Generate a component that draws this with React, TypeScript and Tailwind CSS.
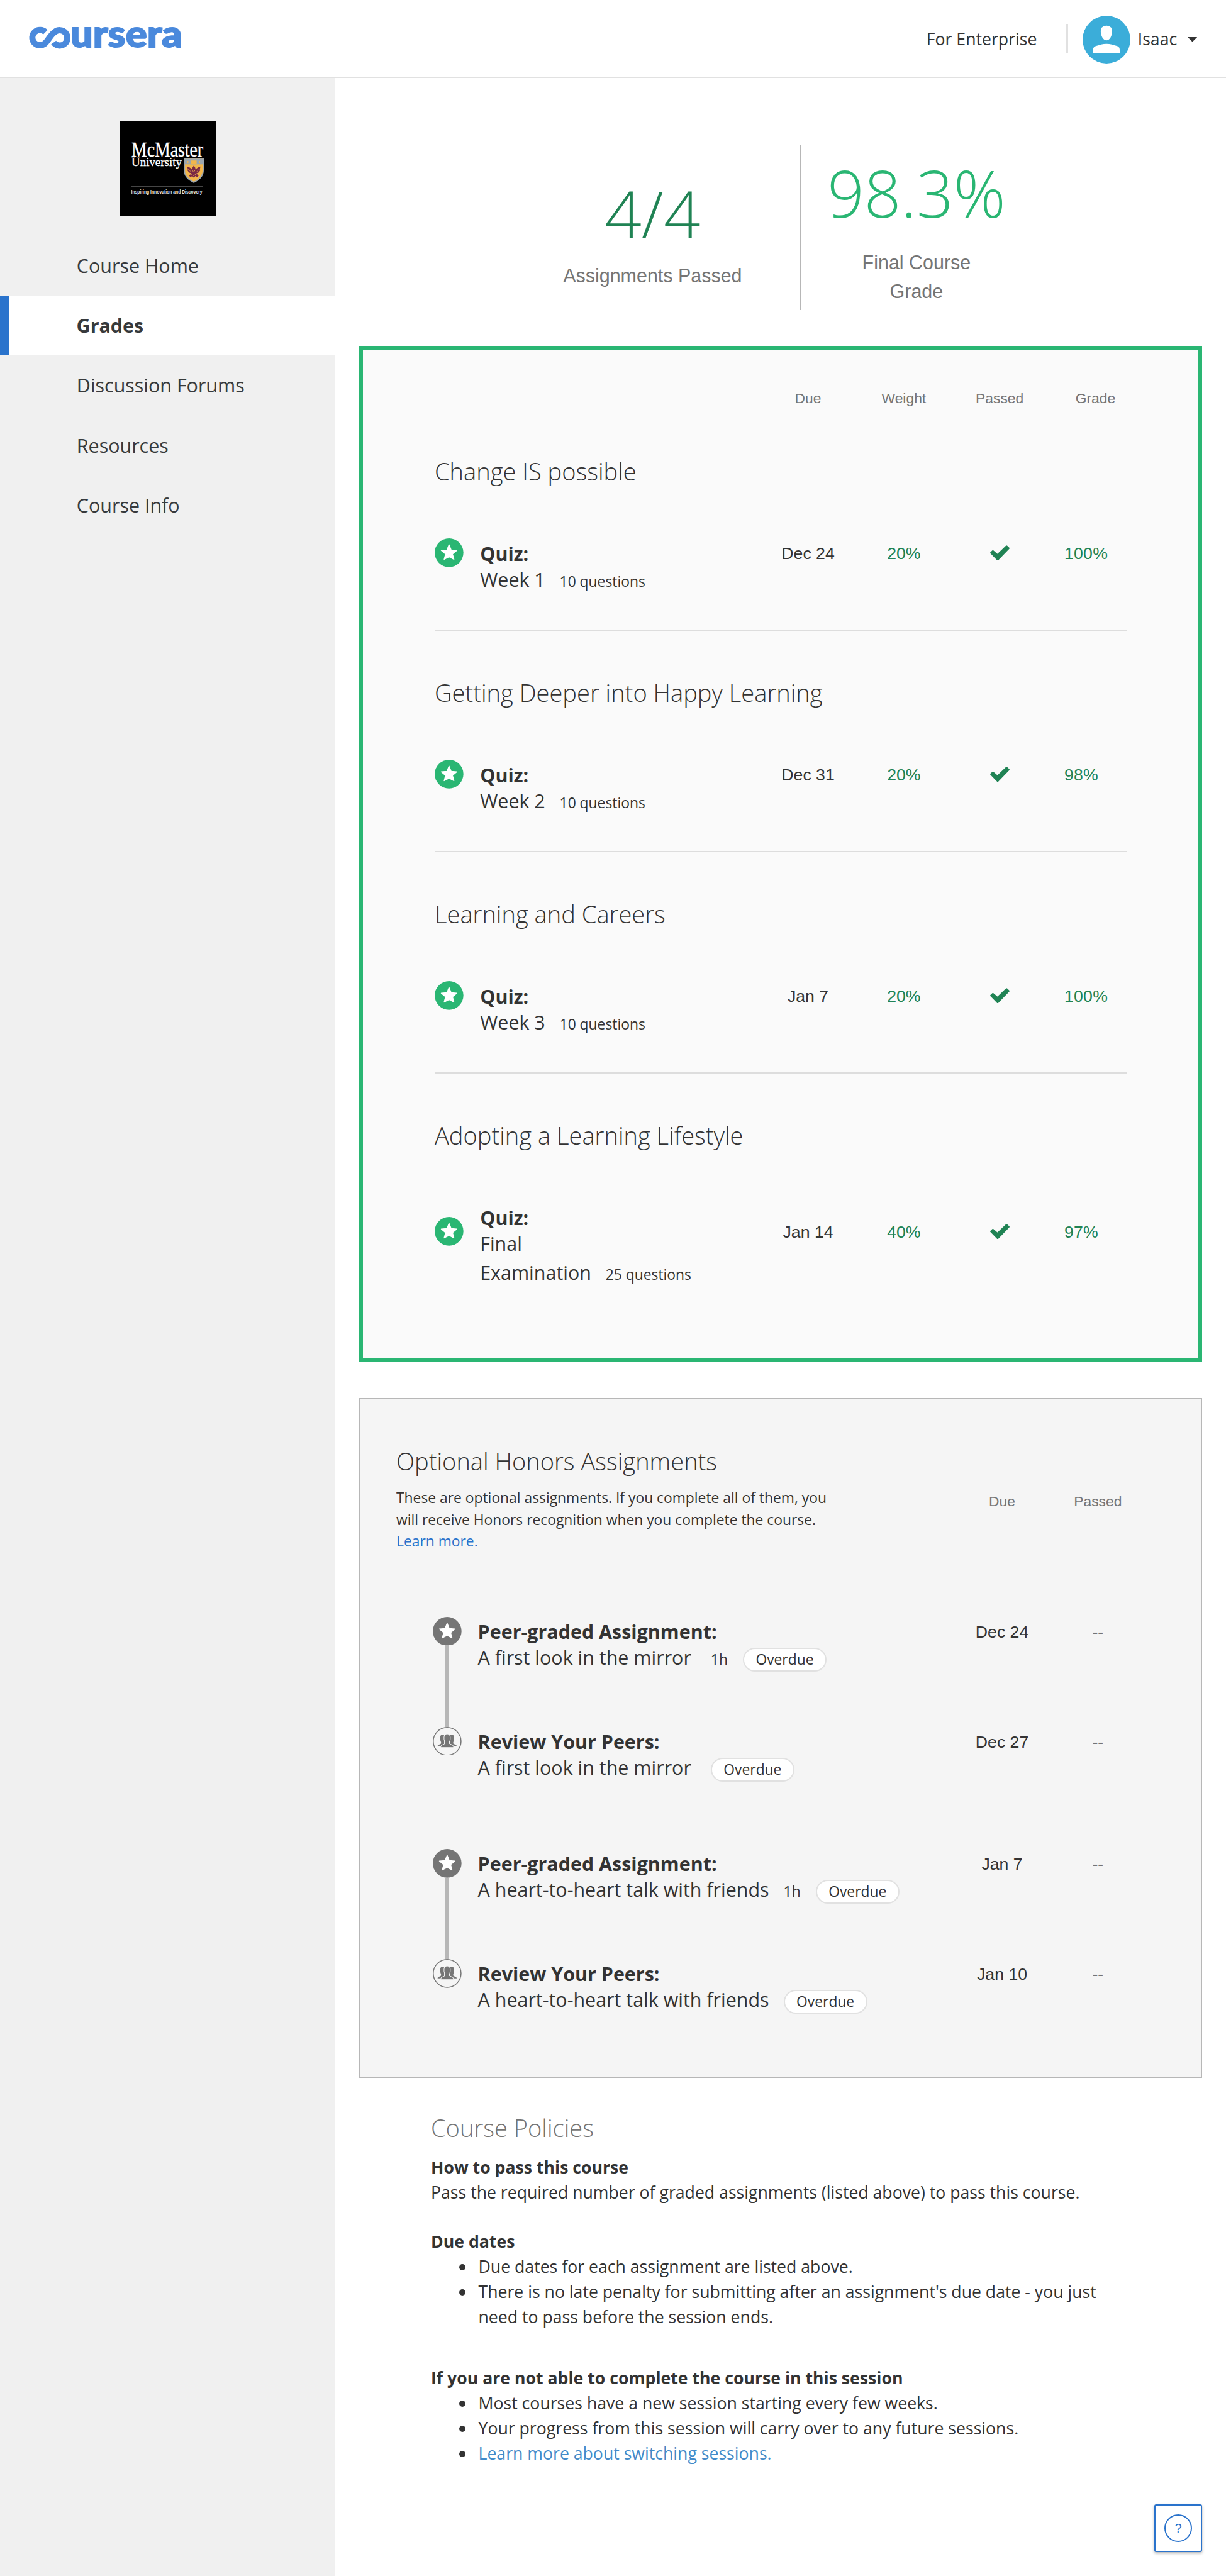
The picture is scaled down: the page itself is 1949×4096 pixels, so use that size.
import React from "react";

const OPEN = "font-['Open_Sans',sans-serif]";
const ARIAL = "font-['Liberation_Sans',sans-serif]";

function CourseraLogo() {
  return (
    <svg className="mt-[11px] block h-[76.1px] w-[276px] overflow-visible" viewBox="0 0 870 240" aria-label="coursera">
      <path
        d="M136 73 A38.5 38.5 0 1 0 132 131 C150 116 160 88 182 73 A38.5 38.5 0 1 1 177 125"
        fill="none"
        stroke="#4a89dc"
        strokeWidth="31"
      />
      <text
        x="261"
        y="149"
        fill="#4a89dc"
        stroke="#4a89dc"
        strokeWidth="6"
        fontFamily="Lato"
        fontWeight="900"
        fontSize="184"
        textLength="561"
        lengthAdjust="spacingAndGlyphs"
      >
        ursera
      </text>
    </svg>
  );
}

function McMasterLogo() {
  return (
    <svg className="block size-[152px] overflow-visible" viewBox="0 0 160 160">
      <rect width="160" height="160" fill="#000" />
      <g fill="#fff" fontFamily="Liberation Serif, serif">
        <text x="19" y="60" fontSize="34.5" textLength="120" lengthAdjust="spacingAndGlyphs" stroke="#fff" strokeWidth="0.4">
          McMaster
        </text>
        <text x="19" y="76" fontSize="20" textLength="84" lengthAdjust="spacingAndGlyphs" stroke="#fff" strokeWidth="0.3">
          University
        </text>
      </g>
      <path
        d="M107.5 63 H139 V83 C139 93 132 99 123.3 103 C114.5 99 107.5 93 107.5 83 Z"
        fill="#f2b54a"
        stroke="#9aa5ae"
        strokeWidth="2"
      />
      <path d="M108.5 64 H138 V73 H108.5 Z" fill="#9aa5ae" />
      <path d="M118.5 66.5 H128 V71.5 H118.5 Z M111.5 69 l1.8 -1.8 l1.8 1.8 l-1.8 1.8 Z M131 69 l1.8 -1.8 l1.8 1.8 l-1.8 1.8 Z" fill="#f2b54a" />
      <path
        d="M123.3 75 l2 3 l1 3 l5 -3.5 l3 -1 l-1 5 l1 1 l-3 4 l-4 2 l4 3 l-2 3 l-3.5 -2 l-2.5 3 l-2.5 -3 l-3.5 2 l-2 -3 l4 -3 l-4 -2 l-3 -4 l1 -1 l-1 -5 l3 1 l5 3.5 l1 -3 Z"
        fill="#7a2a45"
      />
      <path d="M120 82 l3 4 l3 -4 M117 88 l6 4 l6 -4 M113 80 l5 5 M133.5 80 l-5 5" fill="none" stroke="#f2b54a" strokeWidth="0.9" />
      <path d="M19 110.5 H138" stroke="#8c8c8c" strokeWidth="1" />
      <text
        x="18.5"
        y="121.8"
        fill="#e6e6e6"
        fontFamily="Liberation Sans, sans-serif"
        fontWeight="700"
        fontSize="9.8"
        textLength="119"
        lengthAdjust="spacingAndGlyphs"
      >
        Inspiring Innovation and Discovery
      </text>
    </svg>
  );
}

function Avatar() {
  return (
    <svg className="block size-[76px]" viewBox="0 0 80 80">
      <circle cx="40" cy="40" r="40" fill="#3badd9" />
      <path
        d="M40 16.7 C46 16.7 49.4 20.5 49.4 26 C49.4 33.5 45.5 41.2 40 41.2 C34.5 41.2 30.4 33.5 30.4 26 C30.4 20.5 34 16.7 40 16.7 Z"
        fill="#fff"
      />
      <path d="M16.8 63 L17.6 56 C18 52.8 19.8 51.4 23 50.4 C28 49 34 47 40 47 C46 47 52 49 57 50.4 C60.2 51.4 61.6 52.8 62 56 L62.8 63 Z" fill="#fff" />
    </svg>
  );
}

function StarBadge({ color }: { color: string }) {
  return (
    <svg className="block size-[45.7px] shrink-0" viewBox="0 0 48 48">
      <circle cx="24" cy="24" r="24" fill={color} />
      <path
        d="M24 10.6 L27.6 19.4 L37 20.1 L29.8 26.2 L32.2 35.2 L24 31 L15.8 35.2 L18.2 26.2 L11 20.1 L20.4 19.4 Z"
        fill="#fff"
        stroke="#fff"
        strokeWidth="1.4"
        strokeLinejoin="round"
      />
    </svg>
  );
}

function PeersBadge() {
  return (
    <svg className="block size-[45.7px] shrink-0" viewBox="0 0 48 48">
      <circle cx="24" cy="24" r="23.2" fill="none" stroke="#757575" strokeWidth="1.6" />
      <g fill="#757575">
        <path d="M8 32.4 C8 30.4 9.6 29.8 12.8 28.4 C14.2 27.7 14.2 26.4 13.5 24.6 C12.4 22 12 19 12.4 16.6 C12.9 14 14.4 13 16.3 13 C17.6 13 18.4 13.5 19 14.2 V28 L15 32.4 Z" />
        <path d="M40 32.4 C40 30.4 38.4 29.8 35.2 28.4 C33.8 27.7 33.8 26.4 34.5 24.6 C35.6 22 36 19 35.6 16.6 C35.1 14 33.6 13 31.7 13 C30.4 13 29.6 13.5 29 14.2 V28 L33 32.4 Z" />
        <path
          d="M13.2 34.4 C13 31 14.8 30.2 19 28.5 C20.8 27.7 20.8 26.4 20 24.8 C18.9 22.2 18.5 19.4 18.8 16.8 C19.2 13.4 21.2 11.6 24 11.6 C26.8 11.6 28.8 13.4 29.2 16.8 C29.5 19.4 29.1 22.2 28 24.8 C27.2 26.4 27.2 27.7 29 28.5 C33.2 30.2 35 31 34.8 34.4 Z"
          stroke="#f5f5f5"
          strokeWidth="1.1"
        />
      </g>
    </svg>
  );
}

function Check() {
  return (
    <svg className="block h-[24.5px] w-[31px]" viewBox="0 0 98 77">
      <path d="M5 38 L14 29 L37 49 L83 5 L93 15 L38 72 Z" fill="#208354" stroke="#208354" strokeWidth="9" strokeLinejoin="round" />
    </svg>
  );
}

const nav = ["Course Home", "Grades", "Discussion Forums", "Resources", "Course Info"];

type Quiz = { section: string; name: React.ReactNode; questions: number; due: string; weight: string; grade: string };

const quizzes: Quiz[] = [
  { section: "Change IS possible", name: "Week 1", questions: 10, due: "Dec 24", weight: "20%", grade: "100%" },
  { section: "Getting Deeper into Happy Learning", name: "Week 2", questions: 10, due: "Dec 31", weight: "20%", grade: "98%" },
  { section: "Learning and Careers", name: "Week 3", questions: 10, due: "Jan 7", weight: "20%", grade: "100%" },
  {
    section: "Adopting a Learning Lifestyle",
    name: (
      <>
        Final
        <br />
        Examination
      </>
    ),
    questions: 25,
    due: "Jan 14",
    weight: "40%",
    grade: "97%",
  },
];

function QuizSection({ quiz, last }: { quiz: Quiz; last: boolean }) {
  return (
    <section className={last ? "pt-[72px]" : "border-b-2 border-[#dddddd] pt-[72px] pb-[57.2px]"}>
      <h2 className="text-[38.07px] leading-[52px] font-light">{quiz.section}</h2>
      <div className="mt-[39px] -mr-[26.6px] flex items-center">
        <StarBadge color="#2ab673" />
        <div className="ml-[26.5px] grow pt-[47px] text-[30.45px]">
          <div className="leading-[38px] font-bold">Quiz:</div>
          <div className="-mb-[0.8px] leading-[45.7px]">
            {quiz.name}
            <span className="ml-[22.8px] text-[22.84px] leading-none">{quiz.questions} questions</span>
          </div>
        </div>
        <div className={`flex items-center text-[26.65px] leading-[30px] ${ARIAL}`}>
          <div className="w-[152.3px] pt-[2px] text-center">{quiz.due}</div>
          <div className="w-[152.3px] pt-[2px] text-center text-[#208354]">{quiz.weight}</div>
          <div className="flex w-[152.3px] justify-center">
            <Check />
          </div>
          <div className="w-[152.3px] pt-[2px] pl-[26.6px] tracking-[0.3px] text-[#208354]">{quiz.grade}</div>
        </div>
      </div>
    </section>
  );
}

type Peer = { title: string; name: string; time?: string; due: string; first: boolean; wide: boolean };

const peers: Peer[] = [
  { title: "Peer-graded Assignment:", name: "A first look in the mirror", time: "1h", due: "Dec 24", first: true, wide: true },
  { title: "Review Your Peers:", name: "A first look in the mirror", due: "Dec 27", first: false, wide: true },
  { title: "Peer-graded Assignment:", name: "A heart-to-heart talk with friends", time: "1h", due: "Jan 7", first: true, wide: false },
  { title: "Review Your Peers:", name: "A heart-to-heart talk with friends", due: "Jan 10", first: false, wide: false },
];

function PeerRow({ item }: { item: Peer }) {
  return (
    <div className={item.first ? "flex h-[175.1px]" : "flex h-[194.1px]"}>
      <div className="flex w-[45.7px] flex-col items-center">
        {item.first ? <StarBadge color="#757575" /> : <PeersBadge />}
        {item.first && <div className="w-[5.7px] grow bg-[#b7b7b7]" />}
      </div>
      <div className="ml-[25.9px] grow pt-[5.2px] text-[30.45px]">
        <div className="leading-[37.2px] font-bold">{item.title}</div>
        <div className="flex items-baseline leading-[45.7px]">
          <span className={item.wide ? "mr-[31px]" : "mr-[23px]"}>{item.name}</span>
          {item.time && <span className="mr-[24px] text-[22.84px]">{item.time}</span>}
          <span className="rounded-full border-2 border-[#e1e1e1] bg-white px-[18.5px] text-[22.84px] leading-[34px]">Overdue</span>
        </div>
      </div>
      <div className={`flex pt-[9px] text-[26.65px] leading-[30px] ${ARIAL}`}>
        <div className="w-[152.3px] text-center">{item.due}</div>
        <div className="w-[152.3px] text-center text-[#757575]">--</div>
      </div>
    </div>
  );
}

function Bullet({ children }: { children: React.ReactNode }) {
  return (
    <li className="flex">
      <span className="mt-[15px] mr-[21px] ml-[44.5px] size-[10px] shrink-0 rounded-full bg-[#333333]" />
      <span>{children}</span>
    </li>
  );
}

export default function App() {
  return (
    <div className={`flex h-[4096px] w-[1949px] flex-col overflow-hidden bg-white text-[#333333] ${OPEN}`}>
      <header className="flex h-[124px] shrink-0 items-center border-b-2 border-[#e1e1e1] pr-[45.6px] pl-[28.5px]">
        <CourseraLogo />
        <div className="grow" />
        <span className="mt-[3px] text-[26.65px]">For Enterprise</span>
        <div className="mt-px ml-[46px] h-[47.6px] w-[3.8px] bg-[#e1e1e1]" />
        <div className="mt-[3px] ml-[23px]">
          <Avatar />
        </div>
        <span className="mt-[3px] ml-[11.5px] text-[26.65px]">Isaac</span>
        <svg className="mt-[3px] ml-[17px] h-[7.6px] w-[15.2px]" viewBox="0 0 16 8">
          <path d="M0 0 H16 L8 8 Z" fill="#333333" />
        </svg>
      </header>

      <div className="flex grow">
        <aside className="w-[533px] shrink-0 bg-[#f0f0f0] text-[#373a3c]">
          <div className="flex justify-center pt-[68.3px]">
            <McMasterLogo />
          </div>
          <nav className="mt-[30.6px] text-[30.45px]">
            {nav.map((label) => (
              <div
                key={label}
                className={
                  label === "Grades"
                    ? "flex h-[95.17px] items-center border-l-[15.2px] border-[#2a73cc] bg-white pt-px pl-[106.6px] font-bold"
                    : "flex h-[95.17px] items-center pt-px pl-[121.8px]"
                }
              >
                {label}
              </div>
            ))}
          </nav>
        </aside>

        <main className="flex grow flex-col px-[38px] pt-[106.4px]">
          <div className="ml-[232.4px] flex h-[262.6px] text-center">
            <div className="w-[468px] pt-[48.5px]">
              <div className="text-[102.8px] leading-[120px] font-light text-[#208354]">4/4</div>
              <div className={`mt-[17.3px] text-[30.45px] leading-[45.7px] text-[#757575] ${ARIAL}`}>Assignments Passed</div>
            </div>
            <div className="w-[2px] bg-[#b7b7b7]" />
            <div className="w-[367px] pt-[16px]">
              <div className="text-[102.8px] leading-[120px] font-light text-[#2ab673]">98.3%</div>
              <div className={`mt-[28.8px] text-[30.45px] leading-[45.7px] text-[#757575] ${ARIAL}`}>
                Final Course
                <br />
                Grade
              </div>
            </div>
          </div>

          <div className="mt-[57px] h-[1616px] shrink-0 border-6 border-[#2ab673] bg-[#fafafa] px-[114px] pt-[62px]">
            <div className={`-mr-[26.6px] mb-[3px] flex justify-end text-[22.84px] leading-[30px] text-[#757575] ${ARIAL}`}>
              {["Due", "Weight", "Passed", "Grade"].map((label) => (
                <div key={label} className="w-[152.3px] text-center">
                  {label}
                </div>
              ))}
            </div>
            {quizzes.map((quiz, i) => (
              <QuizSection key={quiz.section} quiz={quiz} last={i === quizzes.length - 1} />
            ))}
          </div>

          <div className="mt-[57.3px] h-[1080.5px] shrink-0 border-2 border-[#b7b7b7] bg-[#f5f5f5] pt-[71.5px] pr-[87.5px] pl-[57px]">
            <h2 className="text-[38.07px] leading-[52px] font-light">Optional Honors Assignments</h2>
            <div className="mt-[16.5px] flex justify-between">
              <p className="text-[22.84px] leading-[34.25px] whitespace-nowrap">
                These are optional assignments. If you complete all of them, you
                <br />
                will receive Honors recognition when you complete the course.
                <br />
                <a className="text-[#2a73cc]">Learn more.</a>
              </p>
              <div className={`flex pt-[7px] text-[22.84px] leading-[30px] text-[#757575] ${ARIAL}`}>
                <div className="w-[152.3px] text-center">Due</div>
                <div className="w-[152.3px] text-center">Passed</div>
              </div>
            </div>
            <div className="mt-[102.6px] ml-[58px]">
              {peers.map((item, i) => (
                <PeerRow key={i} item={item} />
              ))}
            </div>
          </div>

          <div className="mt-[53.6px] ml-[114px] text-[26.65px] leading-[39.95px]">
            <h2 className="text-[38.07px] leading-[52px] font-light text-[#757575]">Course Policies</h2>
            <h3 className="mt-[17.8px] font-bold">How to pass this course</h3>
            <p>Pass the required number of graded assignments (listed above) to pass this course.</p>
            <h3 className="mt-[38.3px] font-bold">Due dates</h3>
            <ul>
              <Bullet>Due dates for each assignment are listed above.</Bullet>
              <Bullet>
                There is no late penalty for submitting after an assignment's due date - you just
                <br />
                need to pass before the session ends.
              </Bullet>
            </ul>
            <h3 className="mt-[56.9px] font-bold">If you are not able to complete the course in this session</h3>
            <ul>
              <Bullet>Most courses have a new session starting every few weeks.</Bullet>
              <Bullet>Your progress from this session will carry over to any future sessions.</Bullet>
              <Bullet>
                <a className="text-[#428bca]">Learn more about switching sessions.</a>
              </Bullet>
            </ul>
          </div>

          <div className="mt-auto mb-[38px] flex justify-end">
            <button className="flex size-[76px] items-center justify-center rounded-[3px] border-2 border-[#2a73cc] bg-white shadow-[0_2px_4px_rgba(0,0,0,0.3)]">
              <span className={`flex size-[43.5px] items-center justify-center rounded-full border-2 border-[#2a73cc] text-[20px] text-[#2a73cc] ${ARIAL}`}>
                ?
              </span>
            </button>
          </div>
        </main>
      </div>
    </div>
  );
}
